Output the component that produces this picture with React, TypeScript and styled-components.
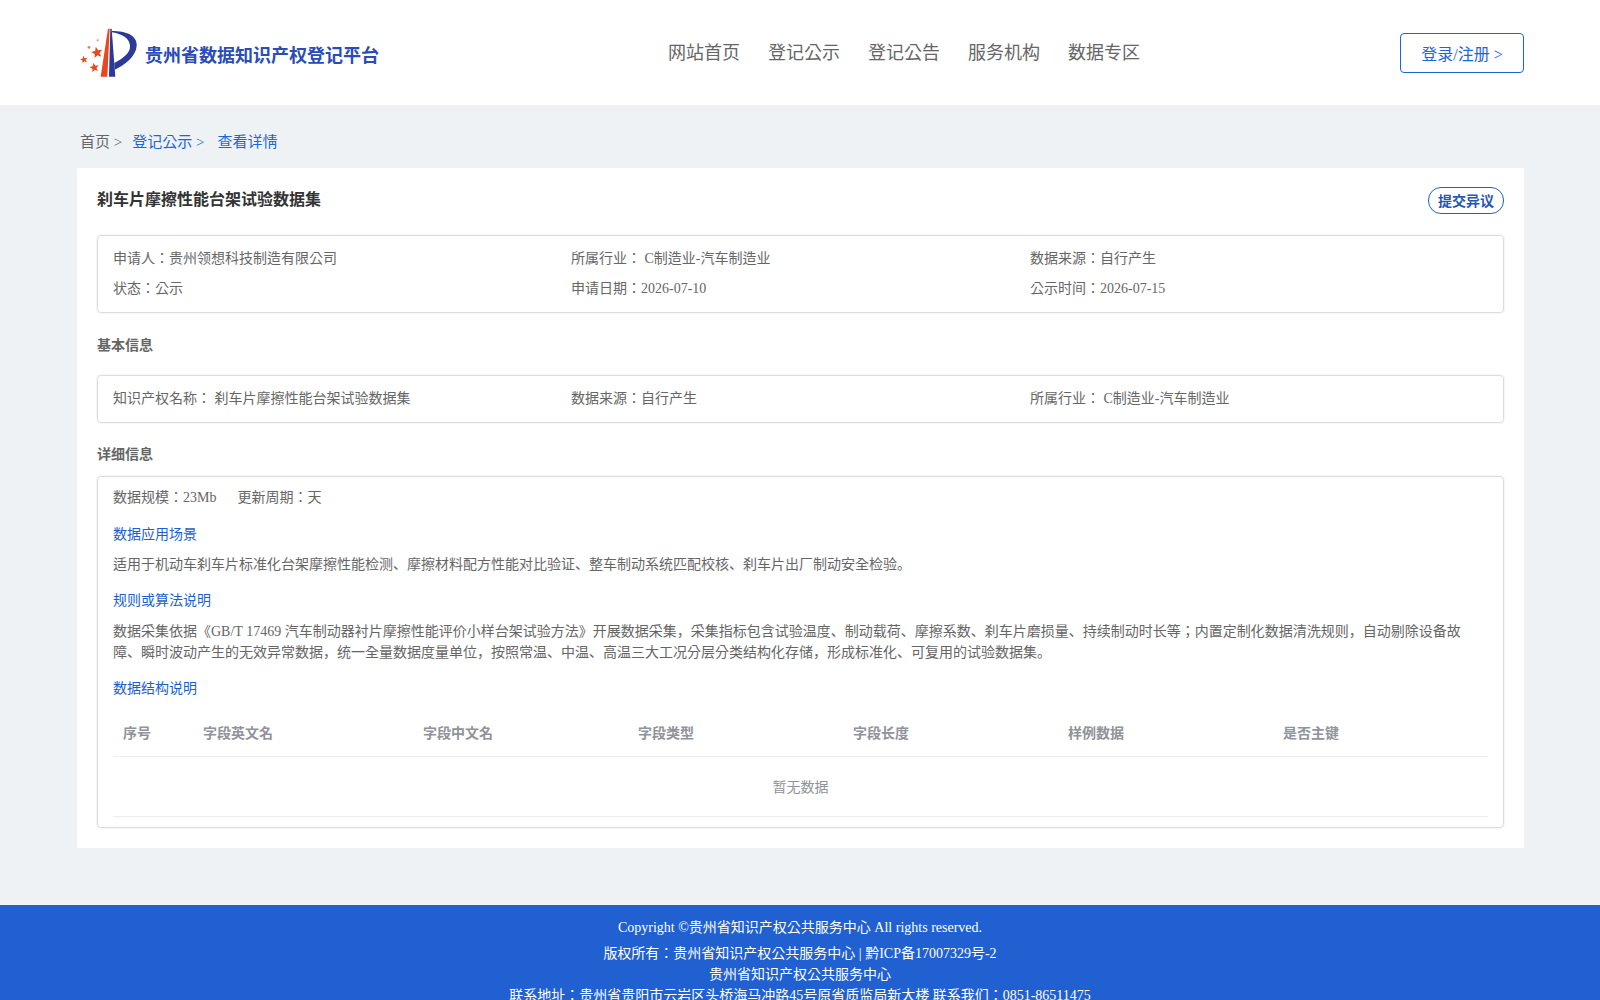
import React from 'react';
import styled, { createGlobalStyle } from 'styled-components';

const GlobalStyle = createGlobalStyle`
  html, body {
    margin: 0;
    padding: 0;
    background: #eff2f5;
    font-family: "Liberation Serif", "Noto Sans CJK KR", serif;
    color: #666666;
  }
  * { box-sizing: border-box; }
`;

const Header = styled.header`
  height: 105px;
  background: #ffffff;
  padding: 0 76px 0 80px;
  display: flex;
  align-items: center;
`;

const Brand = styled.div`
  display: flex;
  align-items: center;
  gap: 8px;
  width: 588px;
  padding-top: 1px;
`;

const BrandName = styled.span`
  font-size: 18px;
  font-weight: 700;
  color: #2a4cb8;
  line-height: 26px;
  padding-top: 5px;
`;

const Nav = styled.nav`
  display: flex;
  gap: 28px;
  font-size: 18px;
  color: #666666;
  margin-bottom: 3px;
`;

const LoginButton = styled.button`
  width: 124px;
  height: 40px;
  margin-left: auto;
  padding: 0;
  background: #ffffff;
  border: 1px solid #1a66e0;
  border-radius: 4px;
  color: #1a66e0;
  font: inherit;
  font-size: 16px;
`;

const Main = styled.main`
  width: 1447px;
  margin: 0 0 0 77px;
  padding-bottom: 57px;
`;

const Breadcrumb = styled.div`
  height: 63px;
  padding: 8px 0 0 3px;
  display: flex;
  align-items: center;
  font-size: 15px;
`;

const Crumb = styled.span<{ $active?: boolean; $gap?: number }>`
  color: ${(p) => (p.$active ? '#1a66e0' : '#666666')};
  margin-right: ${(p) => p.$gap ?? 0}px;
`;

const Card = styled.section`
  background: #ffffff;
  padding: 20px;
`;

const TitleRow = styled.div`
  display: flex;
  justify-content: space-between;
  align-items: flex-start;
  height: 47px;
`;

const Title = styled.h1`
  margin: 0;
  font-size: 16px;
  font-weight: 700;
  line-height: 24px;
  color: #333333;
`;

const ObjectionButton = styled.button`
  width: 76px;
  height: 27px;
  margin-top: -1px;
  padding: 0 0 2px;
  background: #ffffff;
  border: 1px solid #2060c8;
  border-radius: 13px;
  color: #2456b4;
  font: inherit;
  font-size: 14px;
  font-weight: 700;
`;

const Panel = styled.div`
  border: 1px solid #dddddd;
  border-radius: 4px;
  box-shadow: 0 0 2px rgba(0, 0, 0, 0.12);
  padding: 0 15px;
`;

const InfoGrid = styled.div<{ $rowHeight: number; $top: number; $bottom: number }>`
  display: grid;
  grid-template-columns: 458px 459px 458px;
  grid-auto-rows: ${(p) => p.$rowHeight}px;
  align-items: center;
  font-size: 14px;
  padding-top: ${(p) => p.$top}px;
  padding-bottom: ${(p) => p.$bottom}px;
`;

const SectionHeading = styled.h2<{ $height: number; $top?: number }>`
  margin: 0;
  height: ${(p) => p.$height}px;
  padding-top: ${(p) => p.$top ?? 0}px;
  display: flex;
  align-items: center;
  font-size: 14px;
  font-weight: 700;
  color: #666666;
`;

const MetaRow = styled.div`
  display: flex;
  gap: 21px;
  font-size: 14px;
  line-height: 21px;
  padding: 10px 0 1px;
`;

const SubHeading = styled.h3`
  margin: 15px 0 0;
  font-size: 14px;
  font-weight: 400;
  line-height: 21px;
  color: #1a5fd0;
`;

const Paragraph = styled.p<{ $top: number }>`
  margin: ${(p) => p.$top}px 0 0;
  font-size: 14px;
  line-height: 21px;
  color: #666666;
`;

const Table = styled.table`
  width: 1375px;
  margin-top: 13px;
  margin-bottom: 10px;
  border-collapse: collapse;
  table-layout: fixed;
  font-size: 14px;
`;

const HeadCell = styled.th<{ $width: number }>`
  width: ${(p) => p.$width}px;
  height: 44px;
  padding: 0 10px 4px;
  text-align: left;
  font-weight: 700;
  color: #909399;
  border-bottom: 1px solid #ebeef5;
`;

const EmptyCell = styled.td`
  height: 60px;
  text-align: center;
  color: #909399;
  border-bottom: 1px solid #ebeef5;
`;

const Footer = styled.footer`
  background: #2060d0;
  color: #ffffff;
  padding: 12px 0 16px;
  text-align: center;
  font-size: 14px;
  line-height: 21px;
`;

const FooterLine = styled.div<{ $gap?: number }>`
  margin-bottom: ${(p) => p.$gap ?? 0}px;
`;

// five-point star as polygon points, drawn in the logo's coordinates
const starPoints = (cx: number, cy: number, r: number) =>
  Array.from({ length: 10 }, (_, i) => {
    const radius = i % 2 === 0 ? r : r * 0.42;
    const angle = -Math.PI / 2 + (i * Math.PI) / 5 - 0.2;
    return `${cx + radius * Math.cos(angle)},${cy + radius * Math.sin(angle)}`;
  }).join(' ');

const Logo = () => (
  <svg width="57" height="50" viewBox="30 25 171 150" aria-hidden="true">
    <path d="M114 27 L119 27 L112 171 L92 171 Z" fill="#e8481c" />
    <path d="M121 27 L125 27 L136 171 L117 171 Z" fill="#2a3a96" />
    <path
      d="M126 34 C 170 34 202 48 200 78 C 198 110 165 135 134 150 L133 130 C 160 116 182 100 180 78 C 178 56 160 44 126 38 Z"
      fill="#2a3a96"
    />
    <polygon points={starPoints(81, 99, 18)} fill="#e8481c" />
    <polygon points={starPoints(42, 120, 12)} fill="#e8481c" />
    <polygon points={starPoints(73, 144, 15)} fill="#e8481c" />
    <circle cx="57" cy="83" r="4" fill="#ef7a50" />
    <circle cx="83" cy="62" r="3" fill="#ef8a60" />
  </svg>
);

const navItems = ['网站首页', '登记公示', '登记公告', '服务机构', '数据专区'];

const summary = [
  '申请人：贵州领想科技制造有限公司',
  '所属行业： C制造业-汽车制造业',
  '数据来源：自行产生',
  '状态：公示',
  '申请日期：2026-07-10',
  '公示时间：2026-07-15',
];

const basics = [
  '知识产权名称： 刹车片摩擦性能台架试验数据集',
  '数据来源：自行产生',
  '所属行业： C制造业-汽车制造业',
];

const columns: [string, number][] = [
  ['序号', 80],
  ['字段英文名', 220],
  ['字段中文名', 215],
  ['字段类型', 215],
  ['字段长度', 215],
  ['样例数据', 215],
  ['是否主键', 215],
];

export default function App() {
  return (
    <>
      <GlobalStyle />
      <Header>
        <Brand>
          <Logo />
          <BrandName>贵州省数据知识产权登记平台</BrandName>
        </Brand>
        <Nav>
          {navItems.map((item) => (
            <span key={item}>{item}</span>
          ))}
        </Nav>
        <LoginButton>登录/注册 &gt;</LoginButton>
      </Header>
      <Main>
        <Breadcrumb>
          <Crumb $gap={10}>首页 &gt;</Crumb>
          <Crumb $active $gap={13}>登记公示 &gt;</Crumb>
          <Crumb $active>查看详情</Crumb>
        </Breadcrumb>
        <Card>
          <TitleRow>
            <Title>刹车片摩擦性能台架试验数据集</Title>
            <ObjectionButton>提交异议</ObjectionButton>
          </TitleRow>
          <Panel>
            <InfoGrid $rowHeight={30} $top={6} $bottom={10}>
              {summary.map((text) => (
                <span key={text}>{text}</span>
              ))}
            </InfoGrid>
          </Panel>
          <SectionHeading $height={62}>基本信息</SectionHeading>
          <Panel>
            <InfoGrid $rowHeight={42} $top={0} $bottom={4}>
              {basics.map((text) => (
                <span key={text}>{text}</span>
              ))}
            </InfoGrid>
          </Panel>
          <SectionHeading $height={53} $top={7}>详细信息</SectionHeading>
          <Panel>
            <MetaRow>
              <span>数据规模：23Mb</span>
              <span>更新周期：天</span>
            </MetaRow>
            <SubHeading>数据应用场景</SubHeading>
            <Paragraph $top={9}>
              适用于机动车刹车片标准化台架摩擦性能检测、摩擦材料配方性能对比验证、整车制动系统匹配校核、刹车片出厂制动安全检验。
            </Paragraph>
            <SubHeading>规则或算法说明</SubHeading>
            <Paragraph $top={10}>
              数据采集依据《GB/T 17469 汽车制动器衬片摩擦性能评价小样台架试验方法》开展数据采集，采集指标包含试验温度、制动载荷、摩擦系数、刹车片磨损量、持续制动时长等；内置定制化数据清洗规则，自动剔除设备故障、瞬时波动产生的无效异常数据，统一全量数据度量单位，按照常温、中温、高温三大工况分层分类结构化存储，形成标准化、可复用的试验数据集。
            </Paragraph>
            <SubHeading>数据结构说明</SubHeading>
            <Table>
              <thead>
                <tr>
                  {columns.map(([name, width]) => (
                    <HeadCell key={name} $width={width}>{name}</HeadCell>
                  ))}
                </tr>
              </thead>
              <tbody>
                <tr>
                  <EmptyCell colSpan={columns.length}>暂无数据</EmptyCell>
                </tr>
              </tbody>
            </Table>
          </Panel>
        </Card>
      </Main>
      <Footer>
        <FooterLine $gap={5}>Copyright ©贵州省知识产权公共服务中心 All rights reserved.</FooterLine>
        <FooterLine>版权所有：贵州省知识产权公共服务中心 | 黔ICP备17007329号-2</FooterLine>
        <FooterLine>贵州省知识产权公共服务中心</FooterLine>
        <FooterLine>联系地址：贵州省贵阳市云岩区头桥海马冲路45号原省质监局新大楼 联系我们：0851-86511475</FooterLine>
      </Footer>
    </>
  );
}
